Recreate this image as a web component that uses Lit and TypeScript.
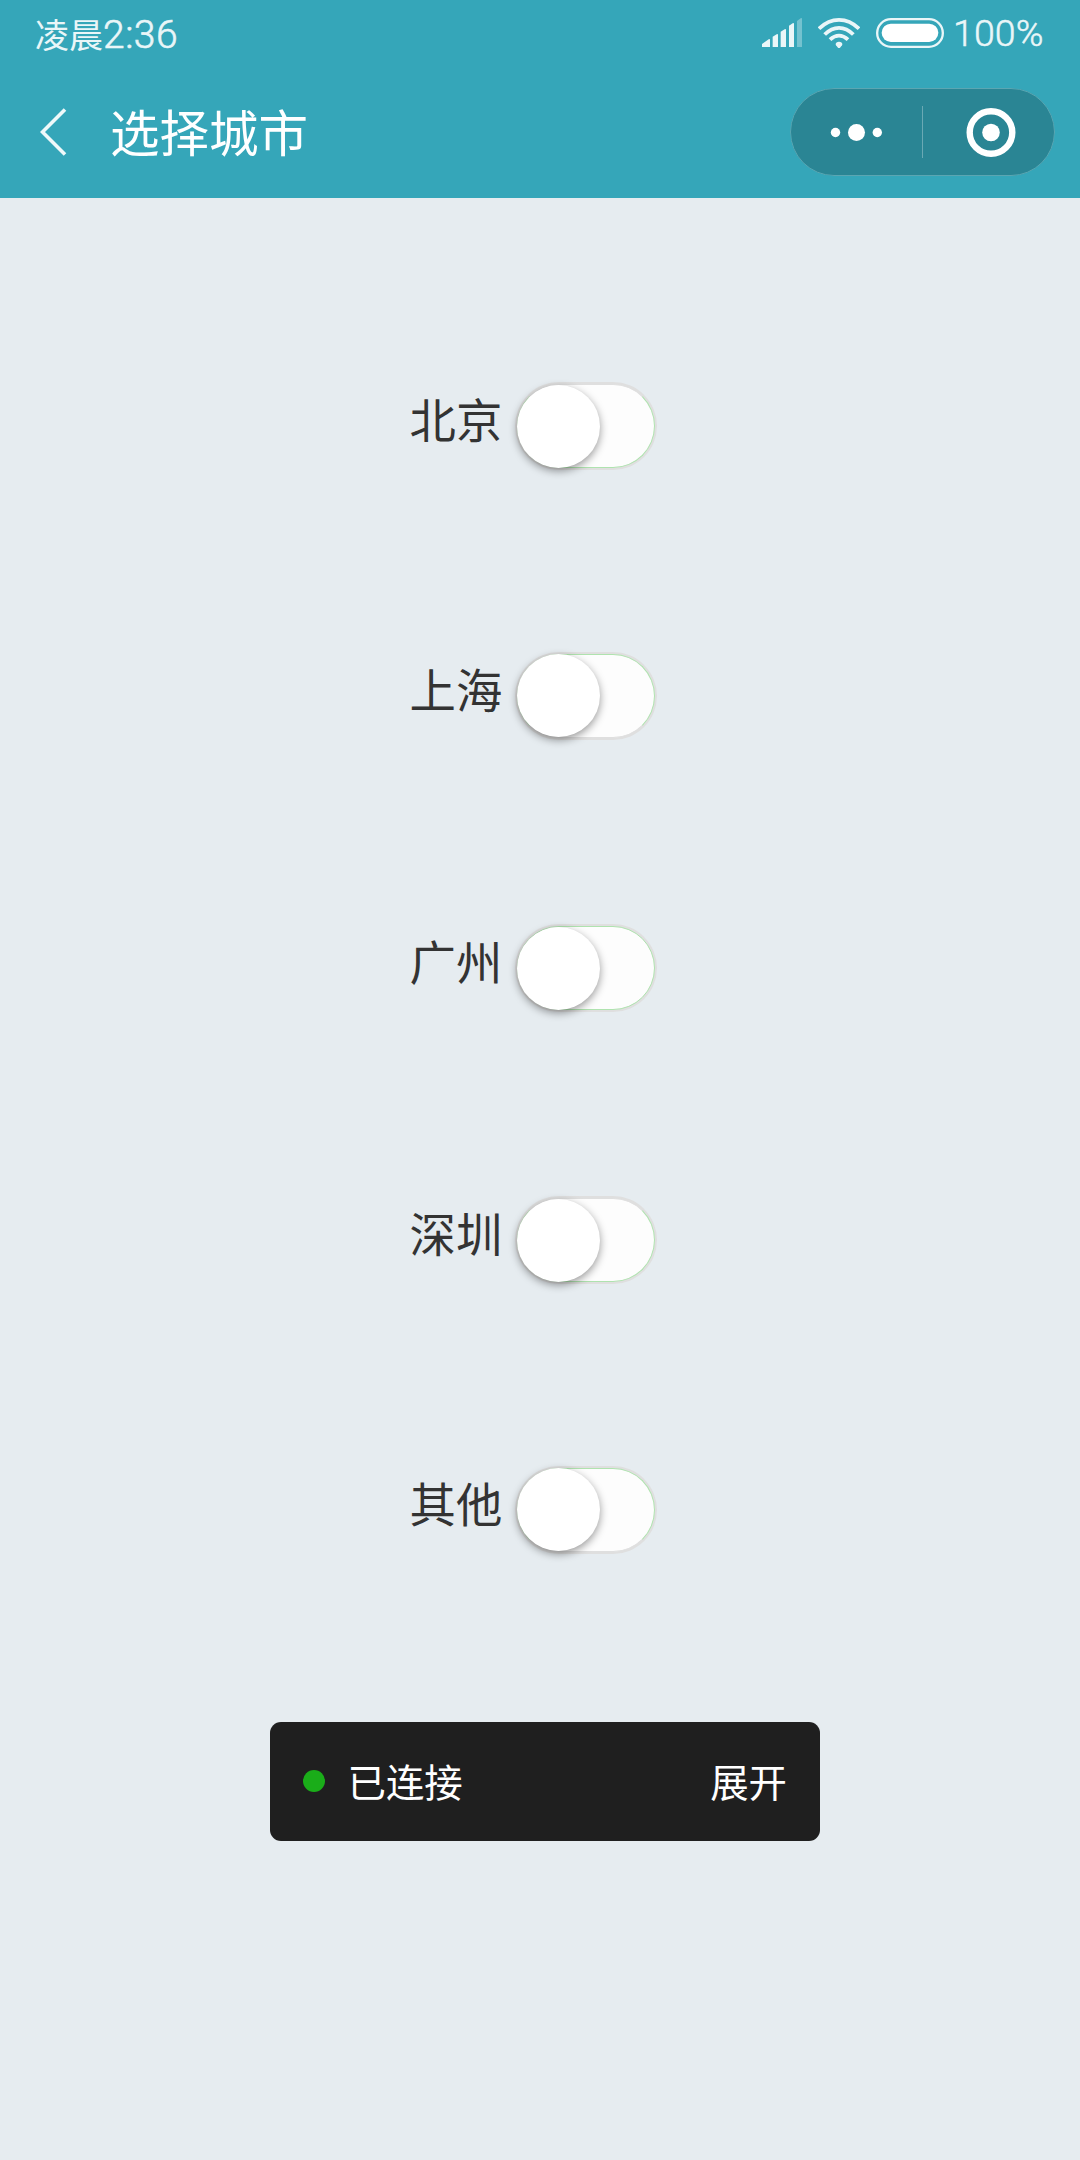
import { LitElement, html, css } from "lit";
import { customElement, property } from "lit/decorators.js";
import { classMap } from "lit/directives/class-map.js";

interface City {
  name: string;
  top: boolean;
  bottom: boolean;
}

const CITIES: City[] = [
  { name: "北京", top: false, bottom: true },
  { name: "上海", top: true, bottom: false },
  { name: "广州", top: true, bottom: true },
  { name: "深圳", top: false, bottom: true },
  { name: "其他", top: true, bottom: false },
];

@customElement("status-bar")
class StatusBar extends LitElement {
  static styles = css`
    :host {
      display: flex;
      align-items: flex-start;
      box-sizing: border-box;
      height: 66px;
      padding: 0 35px;
      color: #eaf6f8;
      white-space: nowrap;
    }
    .time {
      display: flex;
      align-items: baseline;
      flex: 1;
      line-height: 68px;
      font-size: 34px;
    }
    .digits {
      font: 300 39px/68px Roboto, sans-serif;
      letter-spacing: 0.5px;
      -webkit-text-stroke: 0.6px #eaf6f8;
    }
    .signal { margin-top: 18px; }
    .wifi { margin: 17px 0 0 16px; }
    .battery { margin: 18px 0 0 16px; }
    .percent {
      width: 92px;
      margin-left: 9px;
      font: 300 37.5px/67px Roboto, sans-serif;
      letter-spacing: 0.1px;
      -webkit-text-stroke: 0.5px #eaf6f8;
    }
    svg { display: block; flex: none; }
  `;

  render() {
    return html`
      <div class="time"><span>凌晨</span><span class="digits">2:36</span></div>
      <svg class="signal" width="40" height="29" viewBox="66 54 120 87" fill="#eaf6f8">
        <path d="M66 141V132L86 118Q90 116 90 120V141zM98 141V110L110 103Q114 101 114 105V141zM122 141V95L134 88Q138 86 138 90V141zM147 141V77L158 70Q162 68 162 72V141z" />
        <path opacity=".35" d="M171 141V63L182 55Q186 53 186 57V141z" />
      </svg>
      <svg class="wifi" width="42" height="31" viewBox="234 51 126 93" fill="none" stroke="#eaf6f8" stroke-width="11.5">
        <path d="M237 86Q264 59.500 297 59.500T357 86M254 103.500Q274 83.500 297 83.500T340 103.500M270 119Q283 107 297 107T324 119" />
        <path fill="#eaf6f8" stroke="none" d="M297 125C305 125 309 131 306 136L300 143Q297 146 294 143L288 136C285 131 289 125 297 125z" />
      </svg>
      <svg class="battery" width="68" height="30" viewBox="408 54 204 90" fill="none">
        <rect x="411.5" y="57.5" width="197" height="83" rx="41.5" stroke="#eaf6f8" stroke-width="7" />
        <rect x="425" y="71" width="170" height="55" rx="27.5" fill="#fff" />
      </svg>
      <span class="percent">100%</span>
    `;
  }
}

@customElement("nav-bar")
class NavBar extends LitElement {
  static styles = css`
    :host {
      display: flex;
      align-items: center;
      box-sizing: border-box;
      height: 132px;
      padding: 0 25px 0 40px;
      color: #fff;
    }
    .back { display: block; }
    .title {
      flex: 1;
      margin-left: 42px;
      font-size: 49.5px;
      line-height: 132px;
      margin-top: -2px;
    }
    .capsule {
      display: block;
      border-radius: 44px;
    }
  `;

  render() {
    return html`
      <svg class="back" width="28" height="50" viewBox="40 107 28 50" fill="none" stroke="#eff9fa" stroke-width="3.6">
        <path d="M65 109.5L42.5 132L65 154.5" />
      </svg>
      <div class="title">选择城市</div>
      <svg class="capsule" width="265" height="88" viewBox="790 88 265 88">
        <rect x="790.5" y="88.5" width="264" height="87" rx="43.5" fill="#2a8594" stroke="#5ba6b2" />
        <path d="M922.5 106V158" stroke="#6aa9b4" />
        <g fill="#fff">
          <circle cx="835.5" cy="132.5" r="4.7" />
          <circle cx="856.5" cy="132.5" r="8.5" />
          <circle cx="877.3" cy="132.5" r="4.7" />
          <circle cx="991" cy="132.5" r="8.8" />
        </g>
        <circle cx="991" cy="132.5" r="21.3" fill="none" stroke="#fff" stroke-width="6.4" />
      </svg>
    `;
  }
}

@customElement("city-row")
class CityRow extends LitElement {
  @property({ attribute: false }) city!: City;

  static styles = css`
    :host {
      display: flex;
      align-items: flex-start;
      height: 88px;
      padding-left: 409.5px;
    }
    .name {
      width: 105.5px;
      color: #333;
      font-size: 46.4px;
      line-height: 72px;
    }
    .switch {
      box-sizing: border-box;
      width: 142px;
      height: 88px;
      padding: 2px;
      border-radius: 44px;
      background: #dfdfdf;
    }
    .track {
      box-sizing: border-box;
      width: 138px;
      height: 84px;
      border: 1px solid #afe3af;
      border-radius: 42px;
      background: #fdfdfd;
    }
    .track.no-top { border-top-color: #dfdfdf; }
    .track.no-bottom { border-bottom-color: #dfdfdf; }
    .knob {
      width: 83px;
      height: 83px;
      margin-left: -1px;
      border-radius: 50%;
      background: #fff;
      box-shadow: 0 3px 8px rgba(0, 0, 0, 0.4);
    }
    .no-bottom .knob { margin-top: -1px; }
    .track.no-bottom { display: flow-root; }
  `;

  render() {
    const track = classMap({
      track: true,
      "no-top": !this.city.top,
      "no-bottom": !this.city.bottom,
    });
    return html`
      <span class="name">${this.city.name}</span>
      <div class="switch"><div class=${track}><div class="knob"></div></div></div>
    `;
  }
}

@customElement("app-root")
class AppRoot extends LitElement {
  static styles = css`
    :host {
      display: block;
      min-height: 2160px;
      background: #e6ecf0;
      font-family: "Noto Sans CJK SC", sans-serif;
      font-weight: 400;
    }
    .header { height: 198px; background: #35a6b9; }
    .list { padding-top: 184px; }
    .row { margin-bottom: 182px; }
    .row:nth-child(2), .row:nth-child(3) { margin-bottom: 184px; }
    .row:last-child { margin-bottom: 0; }
    .toast {
      display: flex;
      align-items: center;
      box-sizing: border-box;
      width: 549.5px;
      height: 119px;
      margin: 168px 0 0 270px;
      padding: 0 32.5px;
      border-radius: 11px;
      background: #1f1f1f;
      color: #fff;
      font-size: 38.4px;
      line-height: 116px;
    }
    .dot {
      width: 22px;
      height: 22px;
      margin: 0 23px 1px 0;
      border-radius: 50%;
      background: #1aad19;
    }
    .state { flex: 1; }
    .state, .action { height: 119px; }
  `;

  render() {
    return html`
      <div class="header">
        <status-bar></status-bar>
        <nav-bar></nav-bar>
      </div>
      <div class="list">
        ${CITIES.map((c) => html`<city-row class="row" .city=${c}></city-row>`)}
      </div>
      <div class="toast">
        <span class="dot"></span>
        <span class="state">已连接</span>
        <span class="action">展开</span>
      </div>
    `;
  }
}
